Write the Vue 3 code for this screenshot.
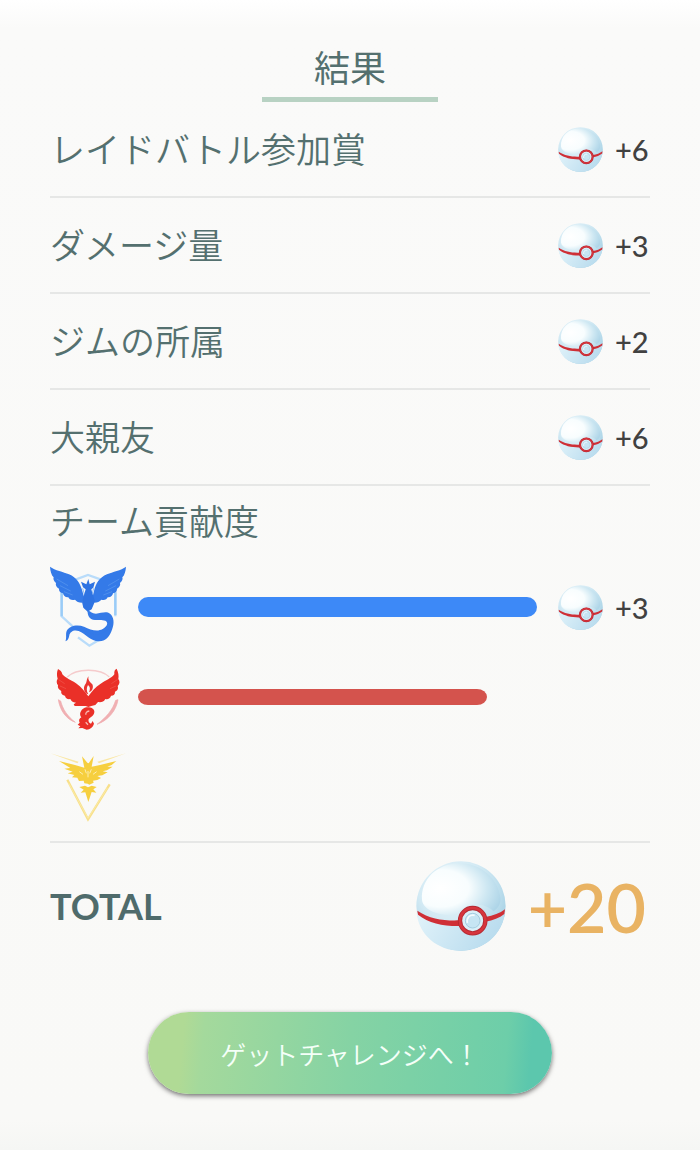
<template>
  <main class="result-page">
    <!-- 共通のボール素材 -->
    <svg class="sprite" aria-hidden="true">
      <defs>
        <radialGradient id="ball-base" cx="40%" cy="30%" r="75%">
          <stop offset="0" stop-color="#eef8fc" />
          <stop offset="0.5" stop-color="#d3eaf4" />
          <stop offset="0.8" stop-color="#b2d8e9" />
          <stop offset="1" stop-color="#97c7de" />
        </radialGradient>
        <radialGradient id="ball-shine" cx="24%" cy="48%" r="85%">
          <stop offset="0" stop-color="#ffffff" />
          <stop offset="0.42" stop-color="#f8fdfe" />
          <stop offset="0.7" stop-color="#cde7f2" />
          <stop offset="1" stop-color="#a6d0e5" />
        </radialGradient>
        <linearGradient id="ball-bottom" x1="0" y1="0" x2="1" y2="0.3">
          <stop offset="0" stop-color="#e2f3fa" />
          <stop offset="1" stop-color="#b9dcee" />
        </linearGradient>
        <symbol id="ball" viewBox="50 33 270 270">
          <circle cx="185" cy="168" r="134" fill="url(#ball-base)" />
          <path d="M68 150C64 88 112 42 178 40C242 38 296 84 303 142C306 160 296 176 282 184C262 160 196 150 172 196C132 198 72 186 68 150Z" fill="url(#ball-shine)" />
          <path d="M52 188C90 216 140 224 185 223C240 222 290 206 318 184C310 252 256 302 185 302C114 302 58 254 52 188Z" fill="url(#ball-bottom)" />
          <path d="M54 182C92 208 138 213 182 211L182 228C134 229 88 220 56 194Z" fill="#cf2f36" />
          <path d="M258 201C282 197 302 190 317 178L315 192C300 204 282 211 258 215Z" fill="#cf2f36" />
          <circle cx="220" cy="212" r="38" fill="#d9eff8" stroke="#b52a33" stroke-width="13" />
          <circle cx="220" cy="212" r="38" fill="none" stroke="#d6353d" stroke-width="8" />
          <circle cx="220" cy="212" r="22" fill="#c6e5f3" stroke="#a4cde0" stroke-width="3" />
          <path d="M204 219C201 202 212 193 226 196" fill="none" stroke="#f5fcff" stroke-width="5" />
        </symbol>
      </defs>
    </svg>

    <h1 class="title">結果</h1>

    <ul class="reward-list">
      <li v-for="r in rewards" :key="r.label" class="reward-row">
        <span class="label">{{ r.label }}</span>
        <span class="reward">
          <svg class="ball" aria-hidden="true"><use href="#ball" /></svg>
          <span class="count">+{{ r.count }}</span>
        </span>
      </li>
    </ul>

    <section class="teams">
      <h2 class="label team-title">チーム貢献度</h2>
      <div v-for="t in teams" :key="t.name" class="team-row">
        <!-- ミスティック -->
        <svg v-if="t.name === 'mystic'" class="emblem" viewBox="30 33 228 246" aria-hidden="true">
          <path d="M100 76L144 60L190 76M65 108V184L98 214M226 108V184M114 247L148 272L178 254" fill="none" stroke="#b9dcfa" stroke-width="7" />
          <path d="M65 112V184M226 112V180" stroke="#9accf7" stroke-width="7" />
          <path d="M30 35C45 47 70 50 87 58C110 68 121 86 127 108L133 128L126 143C116 142 110 140 105 134C96 137 87 133 85 127C76 128 70 122 69 115C61 114 56 107 57 101C49 97 46 90 48 84C41 79 39 72 41 67C34 60 31 48 30 35Z" fill="#347ae8" />
          <path d="M258 35C243 47 218 50 201 58C178 68 167 86 162 108L157 128L163 143C172 142 179 140 184 134C193 137 201 133 203 127C212 128 218 122 219 115C227 114 232 107 231 101C239 97 242 90 240 84C247 79 249 72 247 67C254 60 257 48 258 35Z" fill="#347ae8" />
          <path d="M50 72L84 92M60 92L92 108M72 110L98 120M238 72L204 92M228 92L196 108M216 110L190 120" fill="none" stroke="#5b98ef" stroke-width="2" />
          <path d="M128 100L136 128M161 100L153 128" fill="none" stroke="#8dbdf6" stroke-width="3" />
          <path d="M145 72L149 88L165 80L160 98L154 103L157 115L165 139L155 163L143 170L130 158L126 141L133 117L137 103L129 97L123 80L139 88Z" fill="#2e73e2" />
          <path d="M142 166C150 168 156 176 168 176C184 175 198 167 210 176C222 186 224 204 216 224C209 246 196 258 178 259C152 260 138 236 116 228C102 223 90 230 88 241C86 251 84 257 76 259C81 250 76 238 80 228C87 212 112 207 132 215C152 225 172 231 188 222C202 213 206 203 196 197C181 191 160 200 149 188C143 182 143 173 142 166Z" fill="#347ae8" />
          <path d="M138 226C156 236 178 236 192 228C202 221 208 212 209 202" fill="none" stroke="#347ae8" stroke-width="8" />
        </svg>
        <!-- ヴァーラー -->
        <svg v-else-if="t.name === 'valor'" class="emblem" viewBox="30 3 228 246" aria-hidden="true">
          <path d="M82 66C108 40 180 38 208 66" fill="none" stroke="#f5cbcc" stroke-width="4" />
          <path d="M55 134C60 166 78 192 106 202C82 184 68 162 62 138ZM234 134C229 166 205 196 171 208C198 188 218 165 227 136Z" fill="#f0b0b3" stroke="#f0aaae" stroke-width="2" />
          <path d="M54 42C60 45 66 50 67 58C76 69 94 75 108 85C125 96 134 110 145 124C156 109 165 96 182 86C197 76 214 70 223 58C222 48 225 43 230 41C235 52 237 62 235 72C240 78 240 87 233 93C236 101 232 108 225 110C226 118 219 123 213 122C211 130 204 134 196 132C192 142 181 142 174 141L166 150L154 153L145 156L137 153L104 153L101 148L108 143C98 142 93 138 91 132C83 134 76 129 75 122C67 121 62 115 64 108C56 104 52 98 54 91C49 85 49 76 53 71C50 61 50 52 54 42Z" fill="#ea3028" />
          <path d="M56 74L74 86M60 93L78 101M232 74L214 86M228 93L210 101" stroke="#f0574e" stroke-width="2" />
          <path d="M146 64C142 75 151 82 157 88C162 99 155 110 147 112C151 102 151 95 144 90C139 99 139 108 145 118C131 113 129 98 135 89C142 82 138 73 146 64Z" fill="#e93530" />
          <path d="M134 158C146 154 162 158 163 169C164 181 152 187 146 192C144 199 147 204 153 206L158 198L162 206C159 217 150 223 140 224L127 219L115 220L121 214L113 209L119 203C115 197 118 190 124 187C117 179 120 165 134 158Z" fill="#ea3028" />
          <path d="M148 168C140 169 136 174 138 179M137 202L144 209" fill="none" stroke="#f8b8b2" stroke-width="4" />
        </svg>
        <!-- インスティンクト -->
        <svg v-else class="emblem" viewBox="30 18 228 246" aria-hidden="true">
          <path d="M31 40L116 65L112 70ZM258 40L172 65L177 70Z" fill="#fae7a3" />
          <path d="M82 119L144 238L209 133" fill="none" stroke="#f8e08a" stroke-width="7" />
          <path d="M86 130L144 235L202 144" fill="none" stroke="#fbeeb4" stroke-width="2" />
          <path d="M126 49L142 68L146 70L161 48L155 80L180 75L229 63L215 75L202 80L218 80L201 91L188 94L203 97L187 106L172 108L183 114L172 120L159 122L161 128L148 134L143 131L133 130L131 122L117 123L112 113L96 112L103 105L83 100L98 95L73 86L91 84L57 63L105 75L133 83Z" fill="#f6cf3f" />
          <path d="M135 88L139 100M154 88L149 100M118 95L129 103M170 95L159 103M144 93V112" fill="none" stroke="#fdeeb0" stroke-width="3" />
          <path d="M118 141L135 137L144 142L155 137L170 141L160 148L169 158L155 156L145 186L136 157L122 158L131 149Z" fill="#f6cf3f" />
        </svg>

        <div class="track">
          <div v-if="t.percent" :class="['bar', t.name]" :style="{ width: t.percent + '%' }"></div>
        </div>
        <span v-if="t.count" class="reward">
          <svg class="ball" aria-hidden="true"><use href="#ball" /></svg>
          <span class="count">+{{ t.count }}</span>
        </span>
        <span v-else class="reward-space"></span>
      </div>
    </section>

    <div class="total-row">
      <span class="total-label">TOTAL</span>
      <svg class="ball-large" aria-hidden="true"><use href="#ball" /></svg>
      <span class="total-count">+{{ total }}</span>
    </div>

    <button type="button" class="next-btn">ゲットチャレンジへ！</button>
  </main>
</template>

<script setup>
import { computed } from 'vue'

const rewards = [
  { label: 'レイドバトル参加賞', count: 6 },
  { label: 'ダメージ量', count: 3 },
  { label: 'ジムの所属', count: 2 },
  { label: '大親友', count: 6 }
]

const teams = [
  { name: 'mystic', percent: 100, count: 3 },
  { name: 'valor', percent: 87.5, count: 0 },
  { name: 'instinct', percent: 0, count: 0 }
]

const total = computed(() =>
  [...rewards, ...teams].reduce((sum, item) => sum + item.count, 0)
)
</script>

<style>
body {
  margin: 0;
  background: #fafaf9;
}
</style>

<style scoped>
.result-page {
  box-sizing: border-box;
  display: flex;
  flex-direction: column;
  min-height: 100vh;
  padding: 36px 50px 56px;
  background: linear-gradient(#ffffff, #fafaf9 28px, #f9f9f7 1120px, #f5f6f4);
  color: #54706f;
  font-family: Lato, "Noto Sans CJK JP", sans-serif;
}

.sprite {
  position: absolute;
  width: 0;
  height: 0;
}

.title {
  align-self: center;
  box-sizing: border-box;
  width: 176px;
  height: 66px;
  margin: 0;
  border-bottom: 5px solid #b8d2c3;
  font-size: 36px;
  font-weight: 400;
  line-height: 64px;
  text-align: center;
}

.reward-list {
  margin: 0;
  padding: 0;
  list-style: none;
}

.reward-row {
  box-sizing: border-box;
  display: flex;
  align-items: center;
  justify-content: space-between;
  height: 96px;
  border-bottom: 2px solid #e6e7e6;
}

.label {
  font-size: 35px;
  font-weight: 350;
  line-height: 70px;
}

.reward {
  display: flex;
  align-items: center;
  flex: none;
  width: 92px;
  gap: 12px;
}

.ball {
  flex: none;
  width: 45px;
  height: 45px;
}

.count {
  color: #414141;
  font-size: 29px;
  font-weight: 500;
}

.teams {
  padding-bottom: 9px;
  border-bottom: 2px solid #e6e7e6;
}

.team-title {
  margin: 0 0 6px;
}

.team-row {
  display: flex;
  align-items: center;
  height: 90px;
}

.emblem {
  flex: none;
  width: 76px;
  height: 82px;
  margin-right: 12px;
}

.track {
  flex: 1;
  margin-right: 21px;
}

.bar {
  height: 20px;
  border-radius: 10px / 50%;
}

.bar.mystic {
  background: #3d89f7;
}

.bar.valor {
  height: 16px;
  background: #d4534d;
}

.reward-space {
  flex: none;
  width: 92px;
}

.total-row {
  display: flex;
  align-items: center;
  height: 126px;
}

.total-label {
  flex: 1;
  color: #4f6b6b;
  font-size: 36px;
  font-weight: 700;
}

.ball-large {
  width: 90px;
  height: 90px;
  margin-right: 22px;
}

.total-count {
  padding-right: 4px;
  color: #e9b363;
  font-size: 68px;
  font-weight: 600;
}

.next-btn {
  align-self: center;
  width: 404px;
  max-width: 100%;
  height: 82px;
  margin-top: 43px;
  padding: 0;
  border: 0;
  border-radius: 41px;
  background: linear-gradient(95deg, #b0da95 9%, #a4d99c 14%, #85d3a4 50%, #6dcea9 88%, #5cc7ad 94%);
  box-shadow: 0 2px 5px rgba(0, 0, 0, 0.55);
  color: #f4fff8;
  font-family: inherit;
  font-size: 26px;
  font-weight: 350;
  cursor: pointer;
}
</style>
